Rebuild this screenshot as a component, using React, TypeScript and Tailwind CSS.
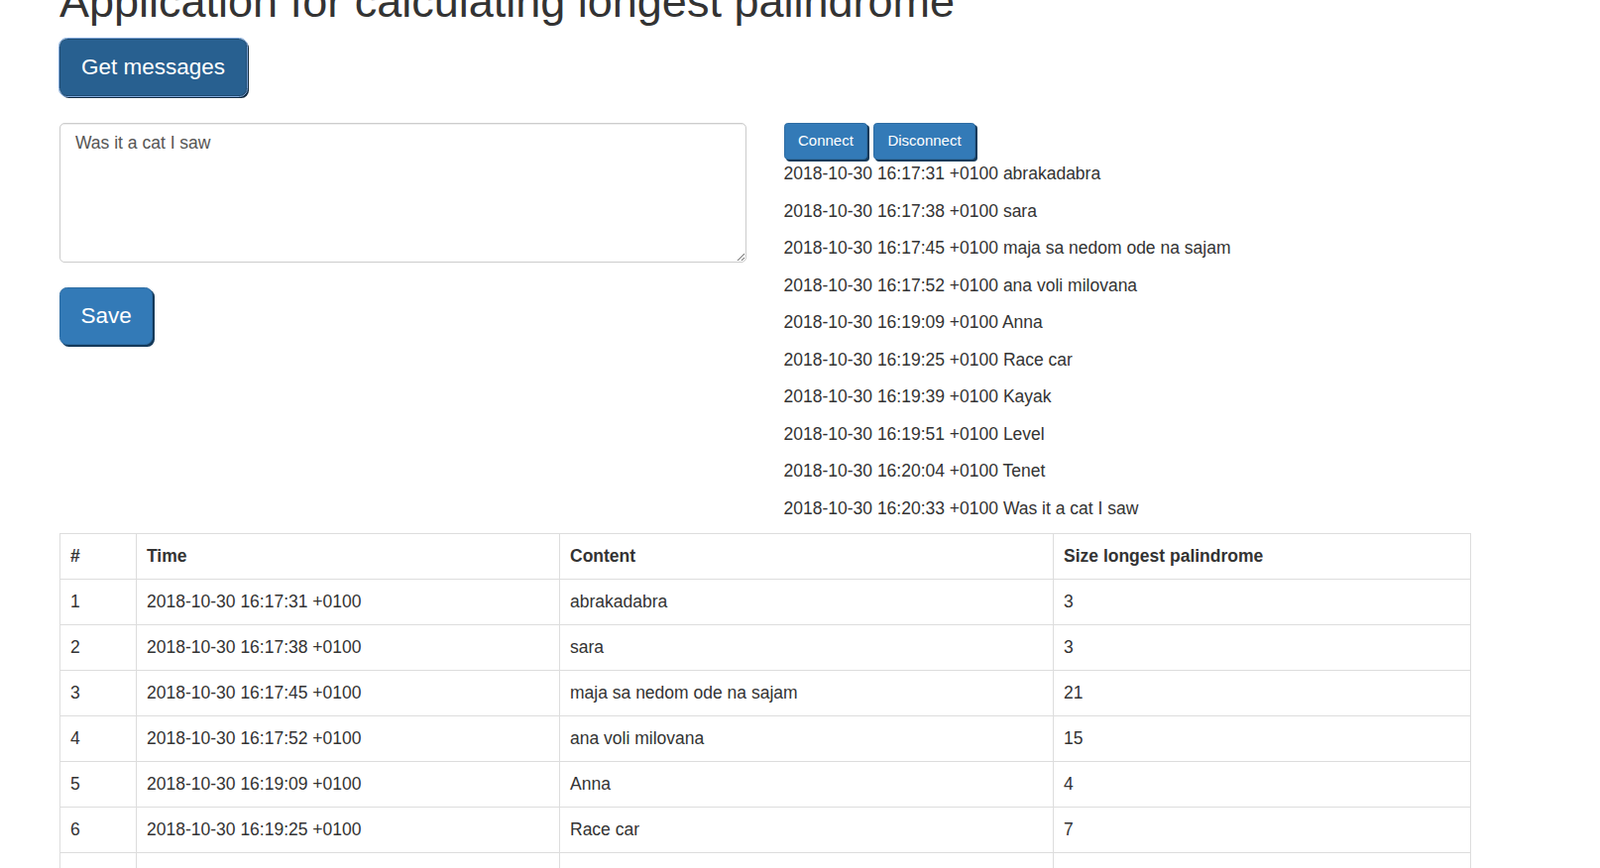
const messages = [
    { time: "2018-10-30 16:17:31 +0100", content: "abrakadabra", size: 3 },
    { time: "2018-10-30 16:17:38 +0100", content: "sara", size: 3 },
    { time: "2018-10-30 16:17:45 +0100", content: "maja sa nedom ode na sajam", size: 21 },
    { time: "2018-10-30 16:17:52 +0100", content: "ana voli milovana", size: 15 },
    { time: "2018-10-30 16:19:09 +0100", content: "Anna", size: 4 },
    { time: "2018-10-30 16:19:25 +0100", content: "Race car", size: 7 },
    { time: "2018-10-30 16:19:39 +0100", content: "Kayak", size: 5 },
    { time: "2018-10-30 16:19:51 +0100", content: "Level", size: 5 },
    { time: "2018-10-30 16:20:04 +0100", content: "Tenet", size: 5 },
    { time: "2018-10-30 16:20:33 +0100", content: "Was it a cat I saw", size: 7 },
];

export default function App() {
    return (
        <div className="min-h-screen overflow-hidden bg-white font-['Liberation_Sans',Arial,sans-serif] text-[17.5px] leading-[25px] text-[#333]">
            <div className="ml-[60px] w-[1424px]">
                <h1 className="mt-[-23.5px] mb-[13px] text-[45px] font-normal leading-[49.5px]">
                    Application for calculating longest palindrome
                </h1>
                <button className="h-[57.5px] rounded-[7.5px] border-[1.25px] border-[#204d74] bg-[#286090] px-[21px] text-[22.5px] leading-[30px] text-white shadow-[2px_2px_0_#10293f] outline outline-[#7fa8db]">
                    Get messages
                </button>

                <div className="mt-[27px] flex gap-[37.5px]">
                    <div className="w-[693px]">
                        <textarea
                            className="block h-[141px] w-full rounded-[5px] border-[1.25px] border-[#ccc] px-[15px] py-[7.5px] text-[#555] shadow-[inset_0_1px_1px_rgba(0,0,0,0.075)] outline-none"
                            defaultValue="Was it a cat I saw"
                        />
                        <button className="mt-[25.5px] h-[57.5px] rounded-[7.5px] border-[1.25px] border-[#2e6da4] bg-[#337ab7] px-[20.5px] text-[22.5px] leading-[30px] text-white shadow-[2px_2px_0_#153a5a]">
                            Save
                        </button>
                    </div>
                    <div className="flex-1">
                        <div className="flex h-[39.5px] items-start gap-[6px]">
                            <button className="h-[37.5px] rounded-[3.75px] border-[1.25px] border-[#2e6da4] bg-[#337ab7] px-[13.5px] text-[15px] leading-[22.5px] text-white shadow-[2px_2px_0_#153a5a]">
                                Connect
                            </button>
                            <button className="h-[37.5px] rounded-[3.75px] border-[1.25px] border-[#2e6da4] bg-[#337ab7] px-[13px] text-[15px] leading-[22.5px] text-white shadow-[2px_2px_0_#153a5a]">
                                Disconnect
                            </button>
                        </div>
                        {messages.map((m) => (
                            <p key={m.time} className="mb-[12.5px]">
                                {m.time} {m.content}
                            </p>
                        ))}
                    </div>
                </div>

                <table className="mt-[-0.5px] w-[1424px] border-collapse border-[1.25px] border-[#ddd] text-left">
                    <thead>
                        <tr>
                            <th className="w-[77px] border-[1.25px] border-[#ddd] p-[10px] font-bold">#</th>
                            <th className="w-[427px] border-[1.25px] border-[#ddd] p-[10px] font-bold">Time</th>
                            <th className="w-[498px] border-[1.25px] border-[#ddd] p-[10px] font-bold">Content</th>
                            <th className="border-[1.25px] border-[#ddd] p-[10px] font-bold">Size longest palindrome</th>
                        </tr>
                    </thead>
                    <tbody>
                        {messages.map((m, i) => (
                            <tr key={m.time}>
                                <td className="border-[1.25px] border-[#ddd] p-[10px]">{i + 1}</td>
                                <td className="border-[1.25px] border-[#ddd] p-[10px]">{m.time}</td>
                                <td className="border-[1.25px] border-[#ddd] p-[10px]">{m.content}</td>
                                <td className="border-[1.25px] border-[#ddd] p-[10px]">{m.size}</td>
                            </tr>
                        ))}
                    </tbody>
                </table>
            </div>
        </div>
    );
}
